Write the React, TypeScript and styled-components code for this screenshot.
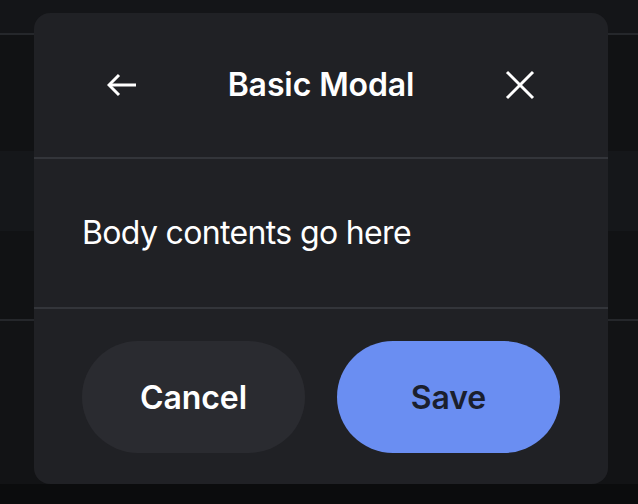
import React from 'react'
import styled, { createGlobalStyle } from 'styled-components'

const GlobalStyle = createGlobalStyle`
  html, body {
    margin: 0;
    padding: 0;
    background: #0b0c0d;
  }
  * {
    box-sizing: border-box;
  }
`

const bands = [
  { height: 33, color: '#141518' },
  { height: 2, color: '#25272b' },
  { height: 116, color: '#111214' },
  { height: 80, color: '#15171a' },
  { height: 88, color: '#111214' },
  { height: 2, color: '#25272b' },
  { height: 163, color: '#121315' },
  { height: 20, color: '#0b0c0d' },
]

const App = () => {
  return (
    <>
      <GlobalStyle />
      <Page>
        {bands.map((b, i) => (
          <Band key={i} $height={b.height} $color={b.color} />
        ))}

        <Modal>
          <ModalHeader>
            <IconButton aria-label='Back'>
              <svg width='30' height='24' viewBox='0 0 30 24' fill='none' stroke='#fff' strokeWidth='3'>
                <path d='M2 12H29' />
                <path d='M12 2L2 12L12 22' />
              </svg>
            </IconButton>
            <Title>Basic Modal</Title>
            <IconButton aria-label='Close'>
              <svg width='30' height='30' viewBox='0 0 30 30' fill='none' stroke='#fff' strokeWidth='3'>
                <path d='M2 2L28 28' />
                <path d='M28 2L2 28' />
              </svg>
            </IconButton>
          </ModalHeader>

          <ModalBody>Body contents go here</ModalBody>

          <ModalFooter>
            <Button>Cancel</Button>
            <Button $primary>Save</Button>
          </ModalFooter>
        </Modal>
      </Page>
    </>
  )
}

const Page = styled.div`
  position: relative;
  width: 638px;
  height: 504px;
  display: flex;
  flex-direction: column;
  overflow: hidden;
  font-family: Inter, "Liberation Sans", sans-serif;
`

const Band = styled.div<{ $height: number; $color: string }>`
  flex: none;
  height: ${p => p.$height}px;
  background: ${p => p.$color};
`

const Modal = styled.div`
  position: absolute;
  left: 34px;
  top: 13px;
  width: 574px;
  height: 471px;
  background: #202125;
  border-radius: 16px;
  display: flex;
  flex-direction: column;
  overflow: hidden;
`

const ModalHeader = styled.div`
  display: flex;
  align-items: center;
  justify-content: space-between;
  padding: 32px 48px;
  border-bottom: 2px solid #33353a;
`

const IconButton = styled.button`
  width: 80px;
  height: 80px;
  padding: 0;
  border: none;
  border-radius: 50%;
  background: transparent;
  display: flex;
  align-items: center;
  justify-content: center;
  cursor: pointer;
`

const Title = styled.h2`
  margin: 0;
  color: #ffffff;
  font-size: 32px;
  font-weight: 600;
  line-height: 40px;
  letter-spacing: -0.1px;
`

const ModalBody = styled.div`
  padding: 48px;
  color: #ffffff;
  font-size: 32px;
  font-weight: 400;
  line-height: 52px;
  letter-spacing: -0.65px;
  border-bottom: 2px solid #33353a;
`

const ModalFooter = styled.div`
  display: flex;
  gap: 32px;
  padding: 32px 48px;
`

const Button = styled.button<{ $primary?: boolean }>`
  flex: 1;
  height: 112px;
  border: none;
  border-radius: 56px;
  background: ${p => (p.$primary ? '#6a8ef2' : '#2a2b30')};
  color: ${p => (p.$primary ? '#1b1f2e' : '#ffffff')};
  font-family: Inter, "Liberation Sans", sans-serif;
  font-size: 32px;
  font-weight: 600;
  letter-spacing: -0.1px;
  cursor: pointer;
`

export default App
